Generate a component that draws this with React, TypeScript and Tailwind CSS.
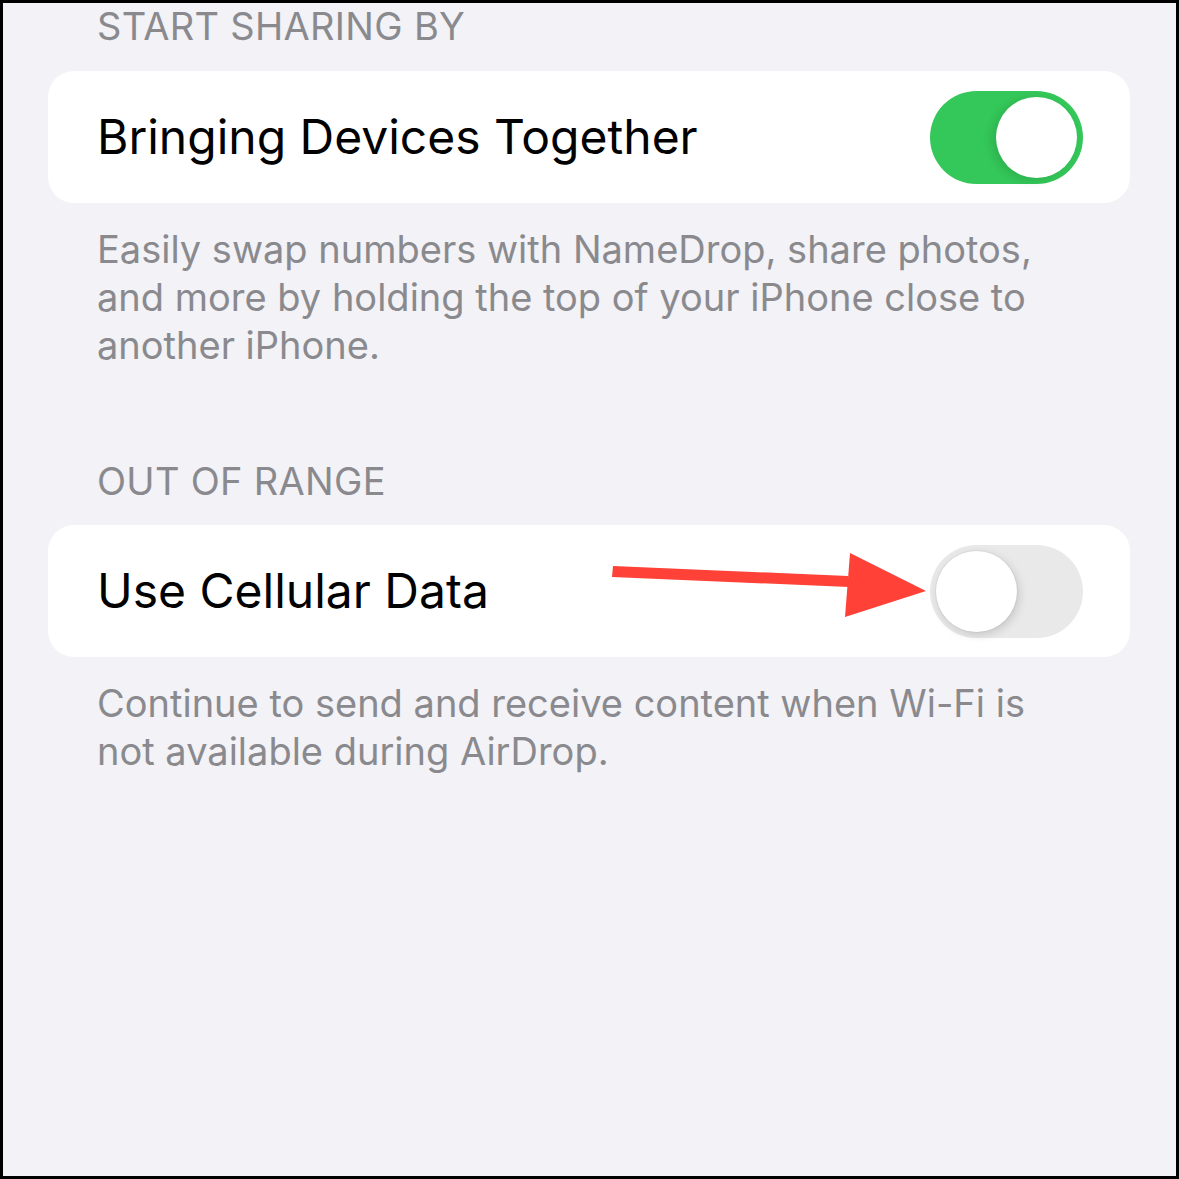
import React from "react";

function Toggle({ on }: { on: boolean }) {
  if (on) {
    return (
      <div className="flex h-[93px] w-[153px] shrink-0 items-center justify-end rounded-full bg-[#34c759] pr-[6px]">
        <div className="h-[81px] w-[81px] rounded-full bg-white shadow-[-4px_2px_10px_rgba(0,0,0,0.12)]" />
      </div>
    );
  }
  return (
    <div className="flex h-[93px] w-[153px] shrink-0 items-center justify-start rounded-full bg-[#e9e9ea] pl-[6px]">
      <div className="h-[81px] w-[81px] rounded-full bg-white shadow-[2px_3px_10px_rgba(0,0,0,0.15),0_0_0_1px_rgba(0,0,0,0.04)]" />
    </div>
  );
}

function SectionHeader({ children }: { children: React.ReactNode }) {
  return (
    <div className="pl-[49px] text-[38px] leading-[44px] tracking-[0.3px] text-[#8a8a8e] uppercase">
      {children}
    </div>
  );
}

function Footnote({ children }: { children: React.ReactNode }) {
  return (
    <p className="pl-[49px] pr-[60px] text-[38px] leading-[48px] text-[#8a8a8e]">
      {children}
    </p>
  );
}

export default function App() {
  return (
    <div
      className="h-[1179px] w-[1179px] overflow-hidden border-[3px] border-black bg-[#f2f2f7] pl-[45px] pr-[46px]"
      style={{ fontFamily: "Inter, 'Noto Sans', sans-serif" }}
    >
      <div className="pt-[1px]">
        <SectionHeader>Start Sharing By</SectionHeader>
      </div>

      {/* Bringing devices card */}
      <div className="mt-[23px] flex h-[132px] items-center justify-between rounded-[26px] bg-white pl-[49px] pr-[47px]">
        <span className="text-[48px] text-black">Bringing Devices Together</span>
        <Toggle on />
      </div>

      <div className="mt-[22px]">
        <Footnote>
          Easily swap numbers with NameDrop, share photos, and more by holding the top of your iPhone close to another iPhone.
        </Footnote>
      </div>

      <div className="mt-[90px]">
        <SectionHeader>Out of Range</SectionHeader>
      </div>

      {/* Cellular card */}
      <div className="relative mt-[22px] flex h-[132px] items-center justify-between rounded-[26px] bg-white pl-[49px] pr-[47px]">
        <span className="text-[48px] text-black">Use Cellular Data</span>
        <Toggle on={false} />
        {/* annotation arrow */}
        <svg
          className="pointer-events-none absolute left-[560px] top-[25px]"
          width="330"
          height="75"
          viewBox="0 0 330 75"
        >
          <polygon points="5,16 240,26 241,37 4,27" fill="#ff4137" />
          <polygon points="242,3 318,41 237,67" fill="#ff4137" />
        </svg>
      </div>

      <div className="mt-[22px]">
        <Footnote>
          Continue to send and receive content when Wi-Fi is not available during AirDrop.
        </Footnote>
      </div>
    </div>
  );
}
